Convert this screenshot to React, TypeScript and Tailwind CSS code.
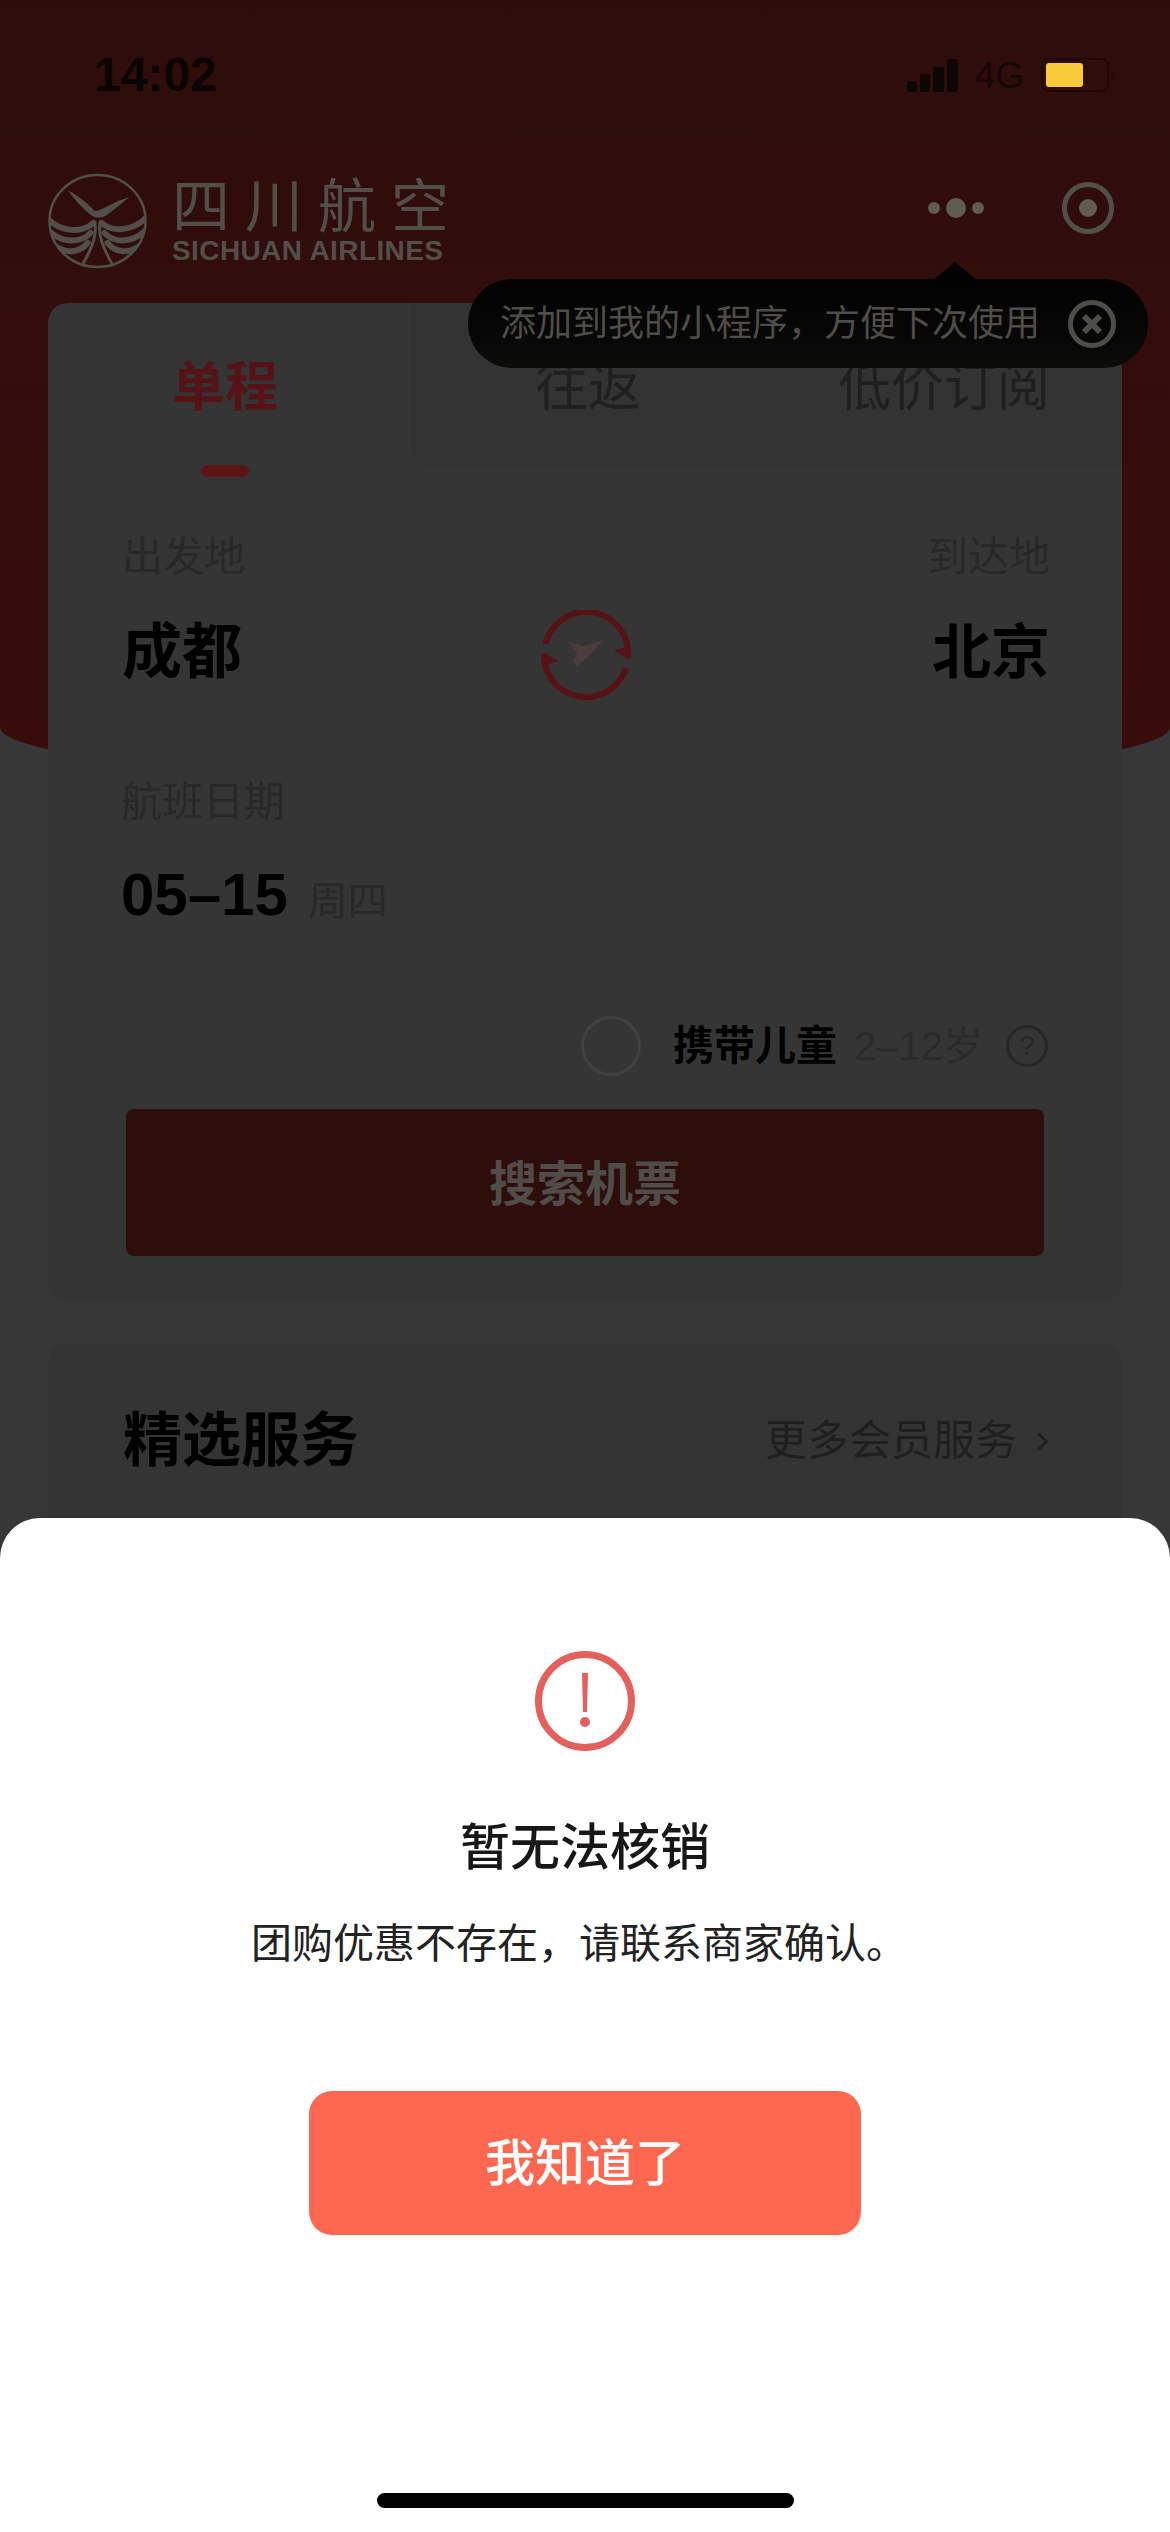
import React from "react";

function Signal() {
  return (
    <svg width="51" height="33" viewBox="0 0 51 33" fill="#0d0605">
      <rect x="0" y="22" width="10" height="11" rx="2" />
      <rect x="13" y="15" width="10" height="18" rx="2" />
      <rect x="26" y="8" width="11" height="25" rx="2" />
      <rect x="40" y="0" width="11" height="33" rx="3" />
    </svg>
  );
}

function Battery() {
  return (
    <svg width="74" height="34" viewBox="0 0 74 34">
      <rect x="1" y="1" width="66" height="32" rx="7" fill="none" stroke="#200807" strokeWidth="2" />
      <rect x="5" y="5" width="37" height="24" rx="3" fill="#f7cb3b" />
      <rect x="70" y="12" width="3" height="10" rx="1.5" fill="#240a09" />
    </svg>
  );
}

function LogoMark() {
  return (
    <svg width="99" height="96" viewBox="0 0 100 96" fill="none">
      <defs>
        <clipPath id="logo-clip">
          <ellipse cx="50" cy="48" rx="48" ry="46" />
        </clipPath>
      </defs>
      <ellipse cx="50" cy="48" rx="48.5" ry="46.5" stroke="#524f4a" strokeWidth="2.5" />
      <path d="M20 17 C30 22 40 30 47 38 C54 38 66 28 82 24 C74 30 66 38 58 43 C52 46 46 45 42 41 C34 34 26 26 20 17Z" fill="#524f4a" />
      <g clipPath="url(#logo-clip)" stroke="#524f4a" fill="none" strokeLinecap="round">
        <path d="M0 46 C14 60 34 60 46 50" strokeWidth="6" />
        <path d="M2 59 C16 71 34 70 43 60" strokeWidth="6" />
        <path d="M6 72 C18 82 32 80 40 70" strokeWidth="6" />
        <path d="M100 44 C86 58 66 60 54 50" strokeWidth="6" />
        <path d="M98 58 C84 71 66 70 57 60" strokeWidth="6" />
        <path d="M94 72 C82 82 68 80 60 70" strokeWidth="6" />
        <path d="M47 50 C50 60 44 76 36 90" strokeWidth="3" />
        <path d="M53 50 C50 60 56 76 64 90" strokeWidth="3" />
      </g>
    </svg>
  );
}

function SwapIcon() {
  return (
    <svg width="90" height="90" viewBox="0 0 90 90" fill="none">
      <path d="M4.3 34.3 A42 42 0 0 1 87 48" stroke="#561216" strokeWidth="6" />
      <path d="M85 57.8 A42 42 0 0 1 3 43.3" stroke="#561216" strokeWidth="6" />
      <path d="M73 40 L86 37 L88 50 Z" fill="#561216" />
      <path d="M2 42 L18 51 L5 55 Z" fill="#561216" />
      <path d="M28 32 L42 36 L62 30 L48 46 L36 56 L32 52 L36 44 Z" fill="#4c3c3d" />
    </svg>
  );
}

function AlertIcon() {
  return (
    <svg width="100" height="100" viewBox="0 0 100 100" fill="none">
      <circle cx="50" cy="50" r="46.5" stroke="#e4605f" strokeWidth="7" />
      <path d="M47 22 H53 L52 61 H48 Z" fill="#e4605f" />
      <circle cx="50" cy="71" r="5" fill="#e4605f" />
    </svg>
  );
}

export default function App() {
  return (
    <div className="relative flex h-[2532px] w-[1170px] flex-col overflow-hidden bg-[#373737] font-['Liberation_Sans','Noto_Sans_CJK_SC',sans-serif]">
      {/* red header, the cards slide up over it */}
      <div className="h-[783px] rounded-b-[585px_56px] bg-gradient-to-b from-[#2d0d0b] to-[#380c0b] pt-[47px]">
        <div className="flex h-[56px] items-center justify-between pr-[55px] pl-[94px]">
          <span className="text-[48px] leading-[56px] font-semibold text-[#0a0403]">14:02</span>
          <div className="flex items-center gap-[17px]">
            <Signal />
            <span className="text-[37px] leading-none text-[#140806]">4G</span>
            <Battery />
          </div>
        </div>
        <div className="mt-[64px] flex items-start justify-between pr-[27px] pl-[48px]">
          <div className="mt-[6px] flex gap-[25px]">
            <LogoMark />
            <div className="flex flex-col">
              <span className="mt-[3px] text-[58px] leading-[62px] tracking-[15px] text-[#524f4a]">四川航空</span>
              <span className="text-[28px] leading-[26px] font-bold tracking-[0.4px] text-[#524f4a]">SICHUAN AIRLINES</span>
            </div>
          </div>
          <div className="flex h-[81px] w-[245px] items-center rounded-[40px] bg-[#300d0c] pr-[29px] pl-[30px]">
            <div className="flex items-center gap-[6px]">
              <span className="size-[12px] rounded-full bg-[#5f5c54]" />
              <span className="size-[20px] rounded-full bg-[#5f5c54]" />
              <span className="size-[12px] rounded-full bg-[#5f5c54]" />
            </div>
            <span className="ml-auto flex size-[52px] items-center justify-center rounded-full border-[5px] border-[#524f4a]">
              <span className="size-[18px] rounded-full bg-[#5f5c54]" />
            </span>
          </div>
        </div>
      </div>

      <div className="relative -mt-[480px] flex flex-col gap-[41px] px-[48px]">
        <div className="flex h-[999px] w-[1074px] flex-col rounded-[20px] bg-[#353535]">
          <div className="flex h-[174px]">
            <div className="flex w-[362px] flex-col items-center pt-[55px] pr-[8px]">
              <span className="text-[53px] leading-[60px] font-bold text-[#561214]">单程</span>
              <span className="mt-[47px] h-[12px] w-[48px] rounded-full bg-[#5c1416]" />
            </div>
            <div className="flex h-[163px] flex-1 rounded-bl-[20px] bg-[#333333] pt-[55px] text-[53px] leading-[60px] text-[#1f1f1f]">
              <span className="w-[356px] text-center">往返</span>
              <span className="w-[356px] text-center">低价订阅</span>
            </div>
          </div>

          <div className="mt-[56px] flex items-end justify-between pr-[72px] pl-[74px]">
            <div className="flex w-[150px] flex-col gap-[37px]">
              <span className="text-[41px] leading-[48px] text-[#282828]">出发地</span>
              <span className="text-[60px] leading-[70px] font-bold text-black">成都</span>
            </div>
            <div className="-mb-[12px]">
              <SwapIcon />
            </div>
            <div className="flex w-[150px] flex-col items-end gap-[37px]">
              <span className="text-[41px] leading-[48px] text-[#282828]">到达地</span>
              <span className="text-[59px] leading-[70px] font-bold text-black">北京</span>
            </div>
          </div>

          <div className="mt-[89px] flex flex-col gap-[33px] pl-[73px]">
            <span className="text-[41px] leading-[50px] text-[#282828]">航班日期</span>
            <div className="flex h-[70px] items-baseline gap-[20px] leading-[70px]">
              <span className="text-[60px] font-bold text-black">05–15</span>
              <span className="text-[40px] text-[#282828]">周四</span>
            </div>
          </div>

          <div className="mt-[86px] flex h-[60px] items-center justify-end pr-[74px]">
            <span className="size-[60px] rounded-full border-[3px] border-[#414141]" />
            <span className="ml-[32px] text-[41px] leading-none font-bold text-black">携带儿童</span>
            <span className="ml-[17px] text-[40px] leading-none text-[#2a2a2a]">2–12岁</span>
            <span className="ml-[23px] flex size-[42px] items-center justify-center rounded-full border-[3px] border-[#262626] text-[28px] leading-none text-[#262626]">?</span>
          </div>

          <button className="mx-[78px] mt-[33px] flex h-[147px] items-center justify-center rounded-[8px] bg-[#2e0e0b] pt-[4px] text-[48px] font-bold text-[#4f4c49]">
            搜索机票
          </button>
        </div>

        <div className="h-[400px] w-[1074px] rounded-[20px] bg-[#343434]">
          <div className="flex items-center justify-between pt-[63px] pr-[74px] pl-[75px]">
            <span className="text-[59px] leading-[70px] font-bold text-black">精选服务</span>
            <div className="flex items-center gap-[20px]">
              <span className="text-[42px] leading-[48px] text-[#1f1f1f]">更多会员服务</span>
              <svg width="11" height="19" viewBox="0 0 11 19" fill="none">
                <path d="M1.5 1.5 L9.5 9.5 L1.5 17.5" stroke="#1f1f1f" strokeWidth="2.5" />
              </svg>
            </div>
          </div>
        </div>
      </div>

      {/* add to my mini program tip */}
      <div className="absolute top-[279px] left-[468px] flex h-[89px] w-[680px] items-center justify-between rounded-[44px] bg-gradient-to-b from-[#030202] to-[#0c0c0b] px-[32px]">
        <svg className="absolute -top-[17px] left-[465px]" width="44" height="18" viewBox="0 0 44 18" fill="#030202">
          <path d="M0 18 L22 0 L44 18 Z" />
        </svg>
        <span className="text-[36px] leading-none whitespace-nowrap text-[#4f4d49]">{"添加到我的小程序\uFF0C方便下次使用"}</span>
        <svg width="48" height="48" viewBox="0 0 48 48" fill="none" stroke="#4f4d49">
          <circle cx="24" cy="24" r="21.5" strokeWidth="5" />
          <path d="M16 16 L32 32 M32 16 L16 32" strokeWidth="6" />
        </svg>
      </div>

      {/* bottom sheet */}
      <div className="absolute top-[1518px] left-0 flex h-[1014px] w-[1170px] flex-col items-center rounded-t-[40px] bg-white pt-[133px]">
        <AlertIcon />
        <span className="mt-[67px] text-[50px] leading-[60px] font-medium text-[#171717]">暂无法核销</span>
        <span className="mt-[41px] pr-[12px] text-[41px] leading-[50px] text-[#222222]">{"团购优惠不存在\uFF0C请联系商家确认\u3002"}</span>
        <button className="mt-[122px] flex h-[144px] w-[552px] items-center justify-center rounded-[23px] bg-[#ff6850] pt-[2px] text-[50px] font-medium text-white">
          我知道了
        </button>
        <span className="mt-[258px] h-[15px] w-[417px] rounded-full bg-black" />
      </div>
    </div>
  );
}
